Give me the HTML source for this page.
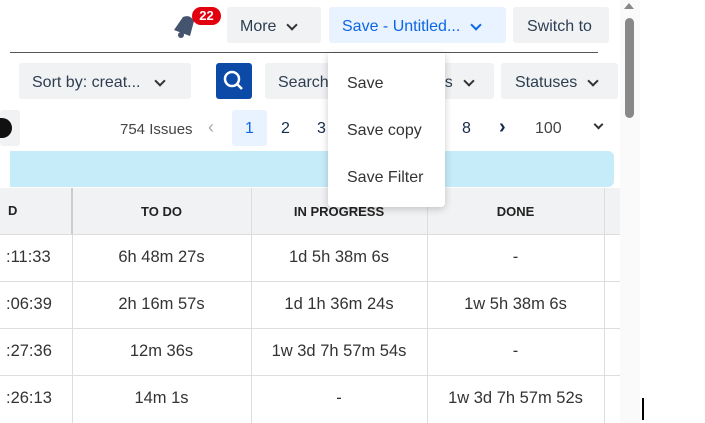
<!DOCTYPE html>
<html><head><style>
body{margin:0;width:705px;height:423px;overflow:hidden;background:#fff;font-family:"Liberation Sans",sans-serif;position:relative;color:#172b4d}
.a{position:absolute}
.btn{position:absolute;background:#f1f2f4;border-radius:3px;font-size:16px;color:#2c3e50;display:flex;align-items:center;box-sizing:border-box;padding-top:3px}
.chev{display:inline-block;width:6px;height:6px;border-right:2px solid #333;border-bottom:2px solid #333;transform:rotate(45deg);margin-left:12px;margin-top:-4px}
.cell{position:absolute;font-size:16.5px;color:#333;text-align:center}
.hd{font-size:13px;font-weight:bold;color:#222}
.vl{position:absolute;width:1px;background:#ddd}
.hl{position:absolute;height:1px;background:#ddd;left:0;width:622px}
</style></head><body>
<svg class="a" style="left:170px;top:10px" width="32" height="30" viewBox="0 0 32 30"><path d="M4 20 L13 7 Q20 4 24 11 L20 26 Z" fill="#44546f"/><circle cx="11" cy="25" r="3" fill="#44546f"/></svg>
<div class="a" style="left:192px;top:7px;width:29px;height:18px;background:#e2000f;border-radius:9px;color:#fff;font-weight:bold;font-size:13px;text-align:center;line-height:18px">22</div>
<div class="btn" style="left:227px;top:7px;width:94px;height:36px;padding-left:13px">More<span class="chev"></span></div>
<div class="btn" style="left:329px;top:7px;width:177px;height:36px;padding-left:13px;background:#e9f2ff;color:#0c66e4">Save - Untitled...<span class="chev" style="border-color:#0c66e4"></span></div>
<div class="btn" style="left:513px;top:7px;width:96px;height:36px;padding-left:14px">Switch to</div>
<div class="a" style="left:10px;top:52px;width:588px;height:1px;background:#555"></div>
<div class="btn" style="left:19px;top:63px;width:172px;height:36px;padding-left:13px">Sort by: creat...<span class="chev" style="margin-left:16px"></span></div>
<div class="a" style="left:216px;top:63px;width:36px;height:36px;background:#0b4aa6;border-radius:3px"><svg width="36" height="36"><circle cx="16" cy="16" r="7" stroke="#fff" stroke-width="2.5" fill="none"/><line x1="21" y1="21" x2="26" y2="26" stroke="#fff" stroke-width="2.5"/></svg></div>
<div class="btn" style="left:265px;top:63px;width:229px;height:36px;padding-left:13px">Search<span style="margin-left:116px">s</span><span class="chev"></span></div>
<div class="btn" style="left:501px;top:63px;width:117px;height:36px;padding-left:14px">Statuses<span class="chev"></span></div>
<div class="btn" style="left:0;top:110px;width:20px;height:36px;padding-top:0"><div style="width:12px;height:20px;background:#111;border-radius:0 10px 10px 0"></div></div>
<div class="a" style="left:120px;top:121px;font-size:15px;color:#444">754 Issues</div>
<div class="a" style="left:208px;top:117px;font-size:18px;color:#aaa">‹</div>
<div class="a" style="left:232px;top:110px;width:35px;height:36px;background:#e9f2ff;border-radius:3px;color:#0c66e4;font-size:16px;text-align:center;line-height:38px">1</div>
<div class="a" style="left:281px;top:120px;font-size:16px">2</div>
<div class="a" style="left:317px;top:120px;font-size:16px">3</div>
<div class="a" style="left:462px;top:120px;font-size:16px">8</div>
<div class="a" style="left:499px;top:116px;font-size:20px;font-weight:bold">›</div>
<div class="a" style="left:535px;top:120px;font-size:16px;color:#444">100</div>
<span class="chev a" style="left:583px;top:125px;width:5px;height:5px"></span>
<div class="a" style="left:10px;top:151px;width:604px;height:36px;background:#c6ecf9;border-radius:0 6px 6px 0"></div>
<div class="a" style="left:0;top:188px;width:622px;height:46px;background:#f1f2f4"></div>
<div class="vl" style="left:71px;top:188px;height:46px;width:2px;background:#ccc"></div>
<div class="vl" style="left:72px;top:234px;height:189px"></div>
<div class="vl" style="left:251px;top:188px;height:235px"></div>
<div class="vl" style="left:427px;top:188px;height:235px"></div>
<div class="vl" style="left:604px;top:188px;height:235px"></div>
<div class="hl" style="top:234px"></div><div class="hl" style="top:281px"></div><div class="hl" style="top:328px"></div><div class="hl" style="top:375px"></div>
<div class="cell hd" style="left:8px;top:203px">D</div>
<div class="cell hd" style="left:72px;width:179px;top:204px">TO DO</div>
<div class="cell hd" style="left:251px;width:176px;top:204px">IN PROGRESS</div>
<div class="cell hd" style="left:427px;width:177px;top:204px">DONE</div>
<div class="cell" style="left:6px;top:248px">:11:33</div>
<div class="cell" style="left:72px;width:179px;top:248px">6h 48m 27s</div>
<div class="cell" style="left:251px;width:176px;top:248px">1d 5h 38m 6s</div>
<div class="cell" style="left:427px;width:177px;top:248px">-</div>
<div class="cell" style="left:6px;top:295px">:06:39</div>
<div class="cell" style="left:72px;width:179px;top:295px">2h 16m 57s</div>
<div class="cell" style="left:251px;width:176px;top:295px">1d 1h 36m 24s</div>
<div class="cell" style="left:427px;width:177px;top:295px">1w 5h 38m 6s</div>
<div class="cell" style="left:6px;top:342px">:27:36</div>
<div class="cell" style="left:72px;width:179px;top:342px">12m 36s</div>
<div class="cell" style="left:251px;width:176px;top:342px">1w 3d 7h 57m 54s</div>
<div class="cell" style="left:427px;width:177px;top:342px">-</div>
<div class="cell" style="left:6px;top:389px">:26:13</div>
<div class="cell" style="left:72px;width:179px;top:389px">14m 1s</div>
<div class="cell" style="left:251px;width:176px;top:389px">-</div>
<div class="cell" style="left:427px;width:177px;top:389px">1w 3d 7h 57m 52s</div>
<div class="a" style="left:328px;top:53px;width:117px;height:154px;background:#fff;border-radius:0 0 4px 4px;box-shadow:0 2px 8px rgba(0,0,0,.2);font-size:16px;color:#333">
<div class="a" style="left:19px;top:22px">Save</div>
<div class="a" style="left:19px;top:69px">Save copy</div>
<div class="a" style="left:19px;top:116px">Save Filter</div>
</div>
<div class="a" style="left:620px;top:0;width:20px;height:423px;background:#fafafa"></div>
<div class="a" style="left:624px;top:3px;width:0;height:0;border-left:5px solid transparent;border-right:5px solid transparent;border-bottom:6px solid #888"></div>
<div class="a" style="left:625px;top:18px;width:9px;height:100px;background:#888;border-radius:5px"></div>
<div class="a" style="left:642px;top:398px;width:2px;height:22px;background:#000"></div>
</body></html>
